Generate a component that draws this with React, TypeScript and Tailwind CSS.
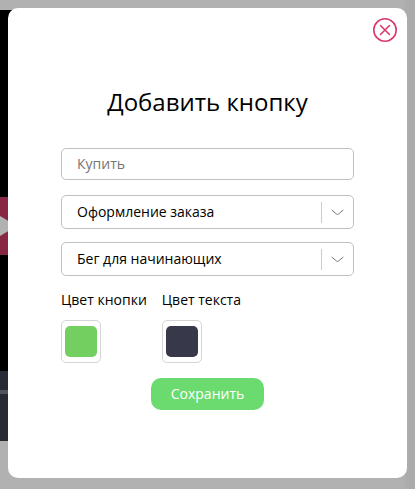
function SelectField({ value }: { value: string }) {
  return (
    <div className="flex h-[34px] items-center rounded-[5px] border border-[#c0c0c0] pl-[15px]">
      <span className="flex-1 whitespace-nowrap">{value}</span>
      <span className="h-[21px] w-px bg-[#ccc]" />
      <span className="flex w-[31px] justify-center">
        <svg width="13" height="7" viewBox="0 0 13 7" fill="none" stroke="#666" strokeWidth="0.9">
          <path d="M0.7 1 L5.6 5.1 Q6.5 5.8 7.4 5.1 L12.3 1" />
        </svg>
      </span>
    </div>
  );
}

function ColorField({ label, swatch }: { label: string; swatch: string }) {
  return (
    <div className="flex flex-col items-start">
      <span className="h-5 whitespace-nowrap leading-5">{label}</span>
      <button className="mt-[10px] flex h-[43px] w-10 items-center justify-center rounded-[5px] border border-[#d5d5d5]">
        <span className={`h-[31px] w-8 rounded-[5px] ${swatch}`} />
      </button>
    </div>
  );
}

function Backdrop() {
  return (
    <div className="absolute inset-0 flex justify-between bg-[#b1b1b1]">
      <div className="flex w-5 flex-col pt-[10px]">
        <div className="h-[187px] bg-black" />
        <div className="flex h-[58px] items-center bg-[#872744]">
          <svg width="11" height="22" viewBox="0 0 11 22" fill="#b2b2b2">
            <path d="M0 1 L11 7.5 V14.5 L0 21 Z" />
          </svg>
        </div>
        <div className="h-[116px] bg-black" />
        <div className="h-[19px] bg-[#282a36]" />
        <div className="h-1 bg-[#53545e]" />
        <div className="h-[47px] bg-[#282a36]" />
      </div>
      <div className="w-[10px] bg-[#acacad]" />
    </div>
  );
}

export default function App() {
  return (
    <div className="relative h-[489px] w-[415px] overflow-hidden p-2 font-['Open_Sans',sans-serif] text-sm text-black">
      <Backdrop />
      <div className="relative flex h-[470px] w-[399px] flex-col rounded-[10px] bg-white px-[53px]">
        <button aria-label="Закрыть" className="absolute right-[10px] top-[10px] h-6 w-6">
          <svg width="24" height="24" viewBox="0 0 24 24" fill="none" stroke="#d93a6c" strokeWidth="1.6" strokeLinecap="round">
            <circle cx="12" cy="12" r="11.2" />
            <path d="M7.5 7.5 L16.5 16.5 M16.5 7.5 L7.5 16.5" />
          </svg>
        </button>
        <h1 className="mt-[78px] h-8 whitespace-nowrap text-center text-2xl leading-8">Добавить кнопку</h1>
        <div className="mt-[30px] flex flex-col gap-[13px]">
          <input
            placeholder="Купить"
            className="mb-[2px] h-8 rounded-[5px] border border-[#c0c0c0] px-[15px] pb-[2px] placeholder:text-[#757575]"
          />
          <SelectField value="Оформление заказа" />
          <SelectField value="Бег для начинающих" />
        </div>
        <div className="mt-[14px] flex gap-[15px]">
          <ColorField label="Цвет кнопки" swatch="bg-[#72cf60]" />
          <ColorField label="Цвет текста" swatch="bg-[#37384a]" />
        </div>
        <button className="mt-[15px] h-8 w-[113px] self-center rounded-[10px] bg-[#6bdb6f] text-white">Сохранить</button>
      </div>
    </div>
  );
}
